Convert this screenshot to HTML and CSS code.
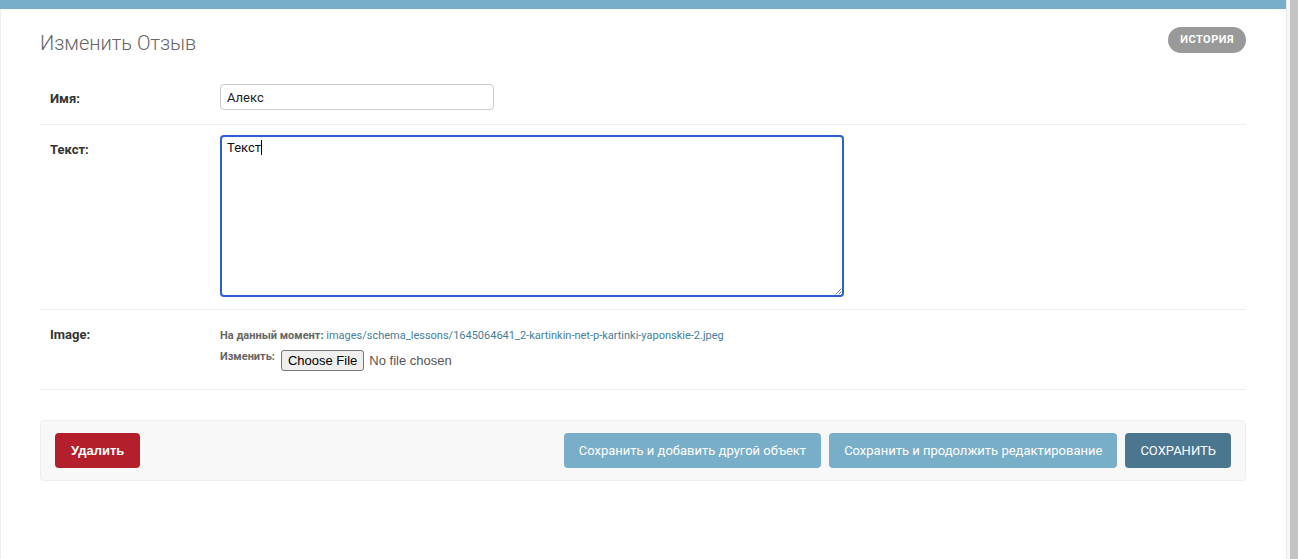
FILE: index.html
```html
<!DOCTYPE html>
<html lang="ru">
<head>
<meta charset="utf-8">
<title>Изменить Отзыв</title>
<link rel="stylesheet" href="styles.css">
</head>
<body>
<div class="window">
  <div class="page">
    <div class="topbar"></div>
    <div class="content">
      <div class="head">
        <h1>Изменить Отзыв</h1>
        <ul class="object-tools"><li><a href="#" class="historylink">История</a></li></ul>
      </div>
      <form class="change-form">
        <fieldset class="module aligned">
          <div class="form-row row-name">
            <label class="required">Имя:</label>
            <input class="vTextField" type="text" value="Алекс">
          </div>
          <div class="form-row row-text">
            <label class="required">Текст:</label>
            <div class="textarea" role="textbox">Текст<span class="caret"></span>
              <svg class="grip" width="8" height="8" viewBox="0 0 8 8"><path d="M7.5 1.5 L1.5 7.5 M7.5 4.5 L4.5 7.5" stroke="#777" stroke-width="1" fill="none"/></svg>
            </div>
          </div>
          <div class="form-row row-image">
            <label>Image:</label>
            <div class="file-upload">
              <div class="fu-line">На данный момент: <a href="#">images/schema_lessons/1645064641_2-kartinkin-net-p-kartinki-yaponskie-2.jpeg</a></div>
              <div class="fu-line fu-change">
                <span class="fu-label">Изменить:</span>
                <span class="file-btn">Choose File</span>
                <span class="file-none">No file chosen</span>
              </div>
            </div>
          </div>
        </fieldset>
        <div class="submit-row">
          <a href="#" class="deletelink">Удалить</a>
          <button type="button" class="btn">Сохранить и добавить другой объект</button>
          <button type="button" class="btn">Сохранить и продолжить редактирование</button>
          <button type="button" class="btn default">Сохранить</button>
        </div>
      </form>
    </div>
  </div>
  <div class="scrollbar"><span class="sb-track"></span><span class="sb-thumb"></span></div>
</div>
</body>
</html>
```
FILE: styles.css
```css
html, body {
  margin: 0;
  padding: 0;
  height: 100%;
  overflow: hidden;
  background: #fff;
}
body {
  font-family: Roboto, "Liberation Sans", Arial, sans-serif;
  font-size: 14px;
  color: #333;
}
.window {
  display: flex;
  height: 559px;
}
.page {
  flex: 1;
  display: flex;
  flex-direction: column;
  min-width: 0;
}
.topbar {
  height: 9px;
  background: #79aec8;
  flex-shrink: 0;
}
.content {
  flex: 1;
  border-left: 1px solid #eee;
  padding: 20px 40px 0 39px;
}
.head {
  display: flex;
  justify-content: space-between;
  align-items: center;
  height: 24px;
  margin-bottom: 21px;
}
h1 {
  margin: 0;
  padding-top: 3px;
  font-size: 20px;
  font-weight: 300;
  line-height: 24px;
  color: #666;
}
.object-tools {
  list-style: none;
  margin: -2px 0 0;
  padding: 0;
}
.object-tools a {
  display: block;
  padding: 3px 12px;
  line-height: 20px;
  background: #999;
  color: #fff;
  font-size: 11px;
  font-weight: 700;
  letter-spacing: 0.5px;
  text-transform: uppercase;
  text-decoration: none;
  border-radius: 15px;
}
.change-form {
  margin: 0;
}
fieldset {
  margin: 0;
  padding: 0;
  border: none;
}
.form-row {
  display: flex;
  align-items: flex-start;
  padding: 10px;
  border-bottom: 1px solid #eee;
  font-size: 13px;
}
.form-row label {
  flex-shrink: 0;
  width: 160px;
  padding: 7px 10px 0 0;
  font-weight: 700;
  font-size: 13px;
  line-height: 16px;
  color: #333;
}
.vTextField {
  display: block;
  box-sizing: border-box;
  width: 274px;
  height: 26px;
  margin: 0 0 4px;
  padding: 5px 6px;
  border: 1px solid #ccc;
  border-radius: 4px;
  font-family: Roboto, "Liberation Sans", Arial, sans-serif;
  font-size: 13px;
  color: #222;
  background: #fff;
}
.textarea {
  position: relative;
  box-sizing: border-box;
  width: 624px;
  height: 162px;
  margin-bottom: 2px;
  padding: 3px 5px;
  border: 2px solid #2d5fd4;
  border-radius: 4px;
  font-size: 13px;
  line-height: 16px;
  color: #111;
}
.caret {
  display: inline-block;
  width: 1px;
  height: 15px;
  background: #000;
  vertical-align: -3px;
}
.grip {
  position: absolute;
  right: 0;
  bottom: 0;
}
.file-upload {
  padding: 6px 0 8px;
  font-size: 11px;
  color: #666;
}
.fu-line {
  line-height: 20px;
  font-weight: 700;
}
.fu-line a {
  font-weight: 400;
  color: #447e9b;
  text-decoration: none;
}
.fu-change {
  display: flex;
  align-items: flex-start;
  height: 25px;
}
.fu-label {
  margin-top: 1px;
  line-height: 20px;
}
.file-btn {
  margin: 4px 0 0 6px;
  box-sizing: border-box;
  height: 21px;
  padding: 0 6px;
  border: 1px solid #767676;
  border-radius: 3px;
  background: #efefef;
  font-family: "Liberation Sans", Arial, sans-serif;
  font-weight: 400;
  font-size: 13px;
  line-height: 19px;
  color: #000;
}
.file-none {
  margin: 4px 0 0 5px;
  font-family: "Liberation Sans", Arial, sans-serif;
  font-weight: 400;
  font-size: 13px;
  line-height: 21px;
  color: #555;
}
.submit-row {
  display: flex;
  align-items: center;
  gap: 8px;
  margin-top: 30px;
  padding: 12px 14px;
  background: #f8f8f8;
  border: 1px solid #eee;
  border-radius: 4px;
}
.deletelink, .btn {
  height: 35px;
  box-sizing: border-box;
  padding: 0 15px;
  border: none;
  border-radius: 4px;
  font-family: Roboto, "Liberation Sans", Arial, sans-serif;
  font-size: 13px;
  line-height: 35px;
  color: #fff;
  text-decoration: none;
}
.deletelink {
  display: block;
  margin-right: auto;
  padding: 0 16px;
  background: #b31f2a;
  font-family: "Liberation Sans", Arial, sans-serif;
  font-weight: 700;
}
.btn {
  background: #79aec8;
  font-weight: 400;
}
.btn.default {
  background: #4a7690;
  text-transform: uppercase;
}
.scrollbar {
  width: 12px;
  flex-shrink: 0;
  display: flex;
}
.sb-track {
  width: 3px;
  border-left: 1px solid #e6e6e6;
  background: #f7f7f7;
}
.sb-thumb {
  flex: 1;
  background: #c3c3c3;
}
```
